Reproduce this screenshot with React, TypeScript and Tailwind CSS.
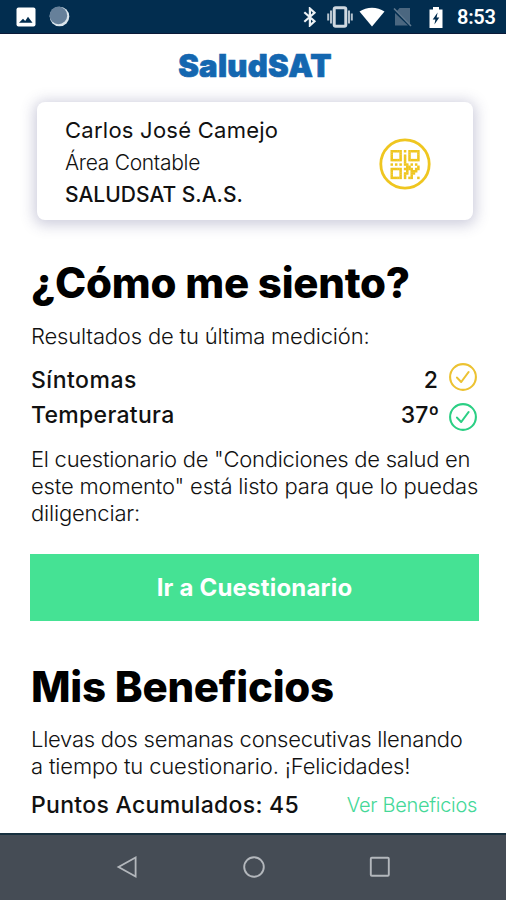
import type { ReactNode } from 'react';

const QR_ROWS = [
    '1111101011111',
    '1000100010001',
    '1000101010001',
    '1000101010001',
    '1111101011111',
    '0000001000000',
    '1010101101010',
    '0000000110001',
    '1111101111011',
    '1000100101110',
    '1000101101100',
    '1000101001000',
    '1111101011001',
];

const QrBadge = () => (
    <svg className="mt-[5px] h-[52px] w-[52px]" viewBox="0 0 52 52">
        <circle cx="26" cy="26" r="24.2" fill="none" stroke="#efc620" strokeWidth="2.8" />
        {QR_ROWS.map((row, y) =>
            row.split('').map((cell, x) =>
                cell === '1' ? (
                    <rect
                        key={`${x}-${y}`}
                        x={11.5 + x * 2.22}
                        y={12 + y * 2.22}
                        width="2.5"
                        height="2.5"
                        fill="#efc620"
                    />
                ) : null
            )
        )}
    </svg>
);

const CheckBadge = ({ color }: { color: string }) => (
    <svg
        className="h-[30px] w-[30px]"
        viewBox="0 0 30 30"
        fill="none"
        stroke={color}
        strokeWidth="2.1"
        strokeLinecap="round"
        strokeLinejoin="round"
    >
        <circle cx="15" cy="15" r="12.9" />
        <path d="M9 15.6l4.2 4.4 7.4-10" />
    </svg>
);

const StatusBar = () => (
    <header className="flex h-[34px] items-center border-b border-[#0a1a38] bg-[#022d4f] pl-4 pr-[12px]">
        <svg className="h-5 w-5" viewBox="0 0 20 20">
            <rect x="0.5" y="0.5" width="19" height="19" rx="2" fill="#fff" />
            <path d="M3 15.8l4-4 2.2 2.2 2.8-4.2 4.5 6z" fill="#022d4f" />
        </svg>
        <svg className="ml-[13px] h-[21px] w-[21px]" viewBox="0 0 21 21">
            <circle cx="10.5" cy="10.5" r="9.8" fill="#dbe5ec" />
            <circle cx="9.4" cy="9.4" r="8.8" fill="#66809a" />
        </svg>
        <div className="ml-auto flex items-center pt-px">
            <svg className="h-5 w-[14px]" viewBox="0 0 14 20" fill="none" stroke="#eef2f5" strokeWidth="2.2">
                <path d="M1.3 5.3l10.2 9-4.6 4.2V1.5l4.6 4.2-10.2 9" />
            </svg>
            <svg className="ml-[10px] h-[22px] w-[26px]" viewBox="0 0 26 22">
                <path d="M1.2 7.5v7M4 4.5v13M22 4.5v13M24.8 7.5v7" stroke="#b6c3ce" strokeWidth="2" />
                <rect x="7.2" y="1.8" width="11.6" height="18.4" rx="1.5" fill="none" stroke="#cfd8e0" strokeWidth="3" />
            </svg>
            <svg className="ml-[6px] h-5 w-[26px]" viewBox="0 0 26 20">
                <path d="M0.5 4.6C7.5-0.7 18.5-0.7 25.5 4.6L13 19.5z" fill="#fff" />
            </svg>
            <svg className="ml-[8px] h-5 w-[19px]" viewBox="0 0 19 20">
                <path d="M6.5 1H17v16.5L4 4z" fill="#4b6780" />
                <path d="M2 6v12.5h13z" fill="#4b6780" />
                <path d="M1 1.5l17 17.5" stroke="#60798f" strokeWidth="1.6" />
            </svg>
            <svg className="ml-[17px] h-[21px] w-[14px]" viewBox="0 0 14 21">
                <path d="M4 0h6v2.5h3.5V21H0.5V2.5H4z" fill="#fff" />
                <path d="M8.6 5.5L3.7 12.4h2.7l-1 5.2 4.9-7H7.6z" fill="#022d4f" />
            </svg>
            <span className="ml-[14px] w-[37px] whitespace-nowrap font-['Roboto'] text-[20px] font-semibold leading-none tracking-[-0.3px] text-white">
                8:53
            </span>
        </div>
    </header>
);

const Title = ({ children }: { children: ReactNode }) => (
    <h1 className="whitespace-nowrap text-[42px] font-extrabold leading-[50px] tracking-[-0.25px] text-black">
        {children}
    </h1>
);

const App = () => {
    return (
        <div className="flex h-[900px] w-[506px] flex-col overflow-hidden bg-white font-['Inter',sans-serif] text-[#111]">
            <StatusBar />

            <main className="flex-1 pl-[31px] pr-[27px]">
                <div className="flex h-[68px] justify-center pt-[14px] text-[31px] font-black leading-9 tracking-[0.3px] text-[#1467b0] [-webkit-text-stroke:0.7px_#1467b0]">
                    SaludSAT
                </div>

                {/* Employee card */}
                <section className="ml-[6px] mr-[6px] flex h-[118px] items-center justify-between rounded-[8px] bg-white pl-[28px] pr-[42px] shadow-[0_2px_14px_3px_rgba(60,60,120,0.25)]">
                    <div className="whitespace-nowrap pt-px">
                        <p className="text-[22px] leading-[34px] tracking-[0.25px]">Carlos José Camejo</p>
                        <p className="text-[21px] font-light leading-8 tracking-[-0.3px]">Área Contable</p>
                        <p className="text-[21px] font-medium leading-[31px]">SALUDSAT S.A.S.</p>
                    </div>
                    <QrBadge />
                </section>

                <section className="mt-[38px] whitespace-nowrap">
                    <Title>¿Cómo me siento?</Title>
                    <p className="mt-[15px] text-[22px] font-light leading-[27px] tracking-[-0.18px]">
                        Resultados de tu última medición:
                    </p>
                    <div className="mt-[13px] flex h-[35px] items-center justify-between pr-px text-[23px] font-medium">
                        <span className="tracking-[0.5px]">Síntomas</span>
                        <div className="flex items-center gap-[10px]">
                            <span>2</span>
                            <div className="-mt-[7px]">
                                <CheckBadge color="#ecc232" />
                            </div>
                        </div>
                    </div>
                    <div className="flex h-[35px] items-center justify-between pr-px text-[23px] font-medium">
                        <span className="tracking-[0.3px]">Temperatura</span>
                        <div className="flex items-center gap-[9px]">
                            <span>37º</span>
                            <div className="mt-[3px]">
                                <CheckBadge color="#2bcf84" />
                            </div>
                        </div>
                    </div>
                    <p className="mt-[13px] text-[22px] font-light leading-[27px] tracking-[-0.18px]">
                        <span className="tracking-[-0.27px]">El cuestionario de "Condiciones de salud en</span>
                        <br />
                        este momento" está listo para que lo puedas
                        <br />
                        diligenciar:
                    </p>
                    <button className="-ml-px mt-[27px] h-[67px] w-[449px] bg-[#45e294] text-[24px] font-bold tracking-[0.2px] text-white">
                        Ir a Cuestionario
                    </button>
                </section>

                <section className="mt-[41px] whitespace-nowrap">
                    <Title>Mis Beneficios</Title>
                    <p className="mt-[14px] text-[22px] font-light leading-[27px] tracking-[-0.16px]">
                        <span className="tracking-[-0.25px]">Llevas dos semanas consecutivas llenando</span>
                        <br />
                        a tiempo tu cuestionario. ¡Felicidades!
                    </p>
                    <div className="mt-[10px] flex items-center justify-between pr-[2px]">
                        <span className="text-[23px] font-medium leading-[30px] tracking-[0.3px]">
                            Puntos Acumulados: 45
                        </span>
                        <a className="text-[20px] font-light tracking-[-0.3px] text-[#45d898]">Ver Beneficios</a>
                    </div>
                </section>
            </main>

            <nav className="flex h-[67px] items-center border-t-2 border-[#17303f] bg-[#454c55] pb-[2px]">
                <svg className="ml-[116px] h-6 w-[22px]" viewBox="0 0 22 24" fill="none" stroke="#b3b7bc" strokeWidth="1.8">
                    <path d="M19.6 2.5v19L2.5 12z" />
                </svg>
                <svg className="ml-[104px] h-6 w-6" viewBox="0 0 24 24" fill="none" stroke="#b3b7bc" strokeWidth="1.9">
                    <circle cx="12" cy="12" r="9.8" />
                </svg>
                <svg className="ml-[102px] h-6 w-6" viewBox="0 0 24 24" fill="none" stroke="#b3b7bc" strokeWidth="1.9">
                    <rect x="2.8" y="2.8" width="18" height="18" rx="1" />
                </svg>
            </nav>
        </div>
    );
};

export default App;
